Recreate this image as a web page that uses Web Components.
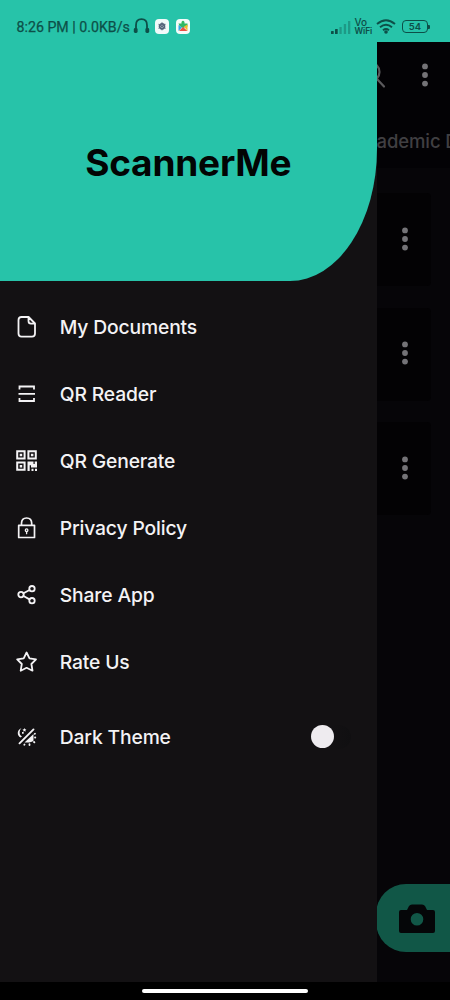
<!DOCTYPE html>
<html lang="en"><head><meta charset="utf-8"><title>ScannerMe</title>
<style>html,body{margin:0;background:#000}body{width:450px;height:1000px;overflow:hidden;font-family:Inter,"Noto Sans",sans-serif}</style></head>
<body><scanner-app></scanner-app>
<script>
const define=(name,css,html)=>customElements.define(name,class extends HTMLElement{
  constructor(){super();const t=document.createElement('template');
    t.innerHTML='<style>*{box-sizing:border-box}svg{display:block}'+css+'</style>'+html;
    this.attachShadow({mode:'open'}).append(t.content.cloneNode(true));}
});

define('status-bar',`
:host{display:flex;height:42px;background:#27c3a9;color:#0d4f48;padding:11px 20px 0 16.5px;align-items:center;font-family:Roboto,sans-serif}
.t{font-size:14.2px;line-height:20px;white-space:nowrap;width:114px;font-weight:400;-webkit-text-stroke:.25px}
.hp{margin-left:2px;margin-top:-1px}.a{margin-left:5.500px}.b{margin-left:7px}
.sig{margin-left:auto;margin-top:1px}
.vo{font:500 10px/9px Inter,sans-serif;width:18px;margin-left:3.500px;white-space:nowrap}.vo div{height:9px}.vo div+div{font-weight:600;font-size:8.500px;line-height:8px;height:8px;letter-spacing:-.1px}
.wifi{margin-left:3.500px}
.bat{margin-left:6px;width:26px;height:13px;border:1.7px solid #0d4f48;border-radius:4px;font:600 9.5px/11px Inter,sans-serif;text-align:center}
.tip{width:2px;height:4px;background:#0d4f48;border-radius:0 1px 1px 0}`,`
<div class="t">8:26 PM | 0.0KB/s</div>
<svg class="hp" width="17" height="16" viewBox="0 0 17 16"><path d="M3 13V7.2C3 3.4 5 1.2 8.5 1.2S14 3.4 14 7.2V13" fill="none" stroke="#0d4f48" stroke-width="1.8"/><rect x=".8" y="10" width="3.8" height="5" rx="1.4" fill="#0d4f48"/><rect x="12.4" y="10" width="3.8" height="5" rx="1.4" fill="#0d4f48"/></svg>
<svg class="a" width="14" height="15" viewBox="0 0 14 15"><rect width="14" height="15" rx="4" fill="#f1fafa"/><circle cx="7" cy="7.3" r="2.5" fill="none" stroke="#55657b" stroke-width="1.7"/><path d="M7 3.3v8M3.5 5.3l7 4M3.5 9.3l7-4" stroke="#55657b" stroke-width="1"/></svg>
<svg class="b" width="14" height="15" viewBox="0 0 14 15"><rect width="14" height="15" rx="4" fill="#f5fcfa"/><path d="M2.500 4.500h3V3q1.500-2.500 3 0v1.500h3v3L7 9 3.500 7z" fill="#31b966"/><path d="M2.500 6l3.500 2.500-3.500 3.500z" fill="#31a6e8"/><path d="M7 8l4.500 4H3z" fill="#ea5146"/><path d="M8 7.500l3.500-2v6.500z" fill="#f5bd2b"/></svg>
<svg class="sig" width="20" height="13" viewBox="0 0 20 13"><g fill="#0d4f48"><rect y="10" width="2.7" height="3" rx=".6"/><rect x="4" y="8" width="2.7" height="5" rx=".6"/><g opacity=".35"><rect x="8.4" y="6" width="2.3" height="7"/><rect x="12.8" y="3" width="2.3" height="10"/><rect x="17" width="2.3" height="13"/></g></g></svg>
<div class="vo"><div>Vo</div><div>WiFi</div></div>
<svg class="wifi" width="20" height="15" viewBox="0 0 20 15"><g fill="none" stroke="#0d4f48" stroke-width="1.9"><path d="M1 5Q10-2.6 19 5M4 8.3q6-5 12 0M7 11.2q3-2.4 6 0"/></g><circle cx="10" cy="13" r="1.8" fill="#0d4f48"/></svg>
<div class="bat">54</div><div class="tip"></div>`);

define('more-dots',`:host{display:block}`,`<svg width="8" height="24" viewBox="0 0 8 24" fill="#747377"><circle cx="4" cy="3.4" r="2.9"/><circle cx="4" cy="12" r="2.9"/><circle cx="4" cy="20.6" r="2.9"/></svg>`);

define('doc-card',`:host{display:flex;height:93px;background:#030204;border-radius:4px;align-items:center;justify-content:flex-end;padding:0 22px 2px 0}`,`<more-dots></more-dots>`);

define('home-page',`
:host{display:flex;flex-direction:column;height:940px;background:#060508}
header{background:#030205;height:126px;display:flex;flex-direction:column}
.bar{display:flex;height:65px;justify-content:flex-end;align-items:center;padding-right:21.500px;gap:35px}
.tab{padding-left:376.500px;height:61px;white-space:nowrap;overflow:hidden;font-weight:500;font-size:18.5px;line-height:68px;color:#403f42;letter-spacing:-.1px}
main{flex:1;padding:25px 19px 0 20px;display:flex;flex-direction:column;gap:21.5px}
.fab{align-self:flex-end;display:flex;align-items:center;width:74px;height:68px;background:#115747;border-radius:30px 0 0 30px;padding:2px 0 0 23px;margin-bottom:30px}`,`
<header><div class="bar"><svg width="26" height="28" viewBox="0 0 26 28" fill="none" stroke="#5b5a5d" stroke-width="2.2" stroke-linecap="round"><circle cx="10" cy="11" r="9.500"/><path d="M17 18l7 7.500"/></svg><more-dots></more-dots></div><div class="tab">ademic D</div></header>
<main><doc-card></doc-card><doc-card></doc-card><doc-card></doc-card></main>
<div class="fab"><svg width="36" height="30" viewBox="0 0 36 30"><path fill="#050608" fill-rule="evenodd" d="M2 6H8L10 2Q11 .5 13 .5H23Q25 .5 26 2L28 6H34Q36 6 36 8V27Q36 29 34 29H2Q0 29 0 27V8Q0 6 2 6M18 9A6.3 6.3 0 1 0 18 21.600A6.3 6.3 0 1 0 18 9"/></svg></div>`);

define('menu-item',`:host{display:flex;height:67.1px;align-items:center;color:#f4f3f5;font-weight:500;font-size:19.3px;line-height:24px;letter-spacing:-.15px}
.i{width:22px;height:22px;margin-right:22.200px}.l{flex:1;white-space:nowrap}`,`<div class="i"><slot name="icon"></slot></div><div class="l"><slot></slot></div><slot name="end"></slot>`);

define('theme-switch',`:host{display:flex;width:40px;height:24px;border-radius:12px;background:linear-gradient(90deg,#131113 50%,#100f11)}i{width:23px;height:23px;border-radius:50%;background:#eeebef}`,`<i></i>`);

define('nav-drawer',`
:host{display:block;width:376.6px;height:940px;background:#131113}
header{height:238.600px;background:#27c3a9;border-radius:0 0 87px 0/0 0 132px 0;display:flex;justify-content:center;align-items:center;font-weight:700;font-size:37px;line-height:44px;color:#020504}
h1{font:inherit;margin:4px 0 0;letter-spacing:-.2px}
nav{padding:12.400px 26px 0 15.600px}
menu-item:last-child{margin-top:8px}
svg{fill:none;stroke:#f4f3f5;stroke-width:1.8;stroke-linejoin:round;stroke-linecap:round}
.f{fill:#f4f3f5;stroke:none}`,`
<header><h1>ScannerMe</h1></header><nav>
<menu-item><svg slot="icon" width="22" height="22"><path d="M5 1H12.600L19 7.500V17.500Q19 20.600 16 20.600H5.500Q2.500 20.600 2.500 17.500V4Q2.500 1 5.500 1M12.500 1V5Q12.500 7.600 15 7.600H19"/></svg>My Documents</menu-item>
<menu-item><svg slot="icon" width="22" height="22" style="stroke-linecap:butt;stroke-linejoin:miter"><path d="M3.500 6.500V3.500H18V6.500M3.500 15V18H18V15M2.500 10.900H19"/></svg>QR Reader</menu-item>
<menu-item><svg slot="icon" width="22" height="22" style="stroke-linejoin:miter"><path d="M1.200 1.200H8.600V8.600H1.200ZM12.400 1.200H19.800V8.600H12.400ZM1.200 12.400H8.600V19.800H1.200Z" stroke-width="2"/><path class="f" d="M3.700 3.700h2.500v2.500H3.700zM14.900 3.700h2.500v2.500h-2.500zM3.700 14.900h2.500v2.500H3.700zM11.500 11.500h6v2.400h1.200v-2.400h2.300v6h-6v-2.300h-1.300V21h-2.200zM15.500 18.700h2v2.200h-2zM19 18.700h2v2.200h-2z"/></svg>QR Generate</menu-item>
<menu-item><svg slot="icon" width="22" height="22"><path d="M2.700 8.300H18.500V20.500H2.700ZM5.500 8V6.300Q5.500 1 10.600 1T15.700 6.300V8" stroke-width="1.7"/><circle cx="10.600" cy="13.200" r="1.300" stroke-width="1.300"/><path d="M10.600 14.700V16.700" stroke-width="1.300"/></svg>Privacy Policy</menu-item>
<menu-item><svg slot="icon" width="22" height="22"><circle cx="5" cy="10.600" r="2.700"/><circle cx="16" cy="4.700" r="2.700"/><circle cx="16" cy="16.700" r="2.700"/><path d="M7.500 9.300L13.500 6M7.500 12L13.500 15.400"/></svg>Share App</menu-item>
<menu-item><svg slot="icon" width="22" height="22"><path d="M10.600 1.500L13.500 7.400L20 8.400L15.400 13L16.500 19.700L10.600 16.800L4.700 19.700L5.800 13L1.200 8.400L7.700 7.400Z"/></svg>Rate Us</menu-item>
<menu-item><svg slot="icon" width="22" height="22"><path class="f" d="M5.500 2C.8 4 .6 9.500 4.700 11.600L6 10.300C3 9.200 2.900 4.700 5.500 2M17.500 8V14.500Q15.500 17 8.500 16.500ZM8.500 2l.6 1.200 1.300.4-1 .8.2 1.300-1.200-.6-1.100.6.200-1.300-1-.8 1.400-.3zM6 6h1.700v1.700H6z"/><path d="M3.500 17.300L17.500 3.400" stroke-width="1.900"/><path d="M18.800 7.800L19 7.700M19 11.500H19.300M18 16L18.400 16.400M13.500 18.200V19M8.500 18.500L8.300 18.800"/></svg>Dark Theme<theme-switch slot="end"></theme-switch></menu-item>
</nav>`);

define('scanner-app',`
:host{display:flex;flex-direction:column;position:relative;width:450px;height:1000px;overflow:hidden;background:#000}
nav-drawer{position:absolute;top:42px;left:0}
footer{height:18px;display:flex;justify-content:center;padding-top:7px}
footer i{width:166px;height:4px;border-radius:2px;background:#fff}`,`
<status-bar></status-bar><home-page></home-page><nav-drawer></nav-drawer><footer><i></i></footer>`);
</script></body></html>
